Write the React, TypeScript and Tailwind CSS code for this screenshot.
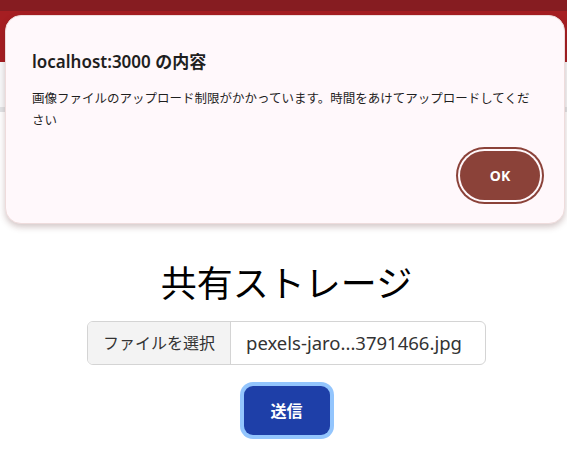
export default function App() {
  const jp = { fontFamily: '"Noto Sans", "Noto Sans CJK JP", sans-serif' }

  return (
    <div className="relative w-[567px] h-[455px] overflow-hidden bg-white" style={jp}>
      {/* Header */}
      <div className="h-[11px] bg-[#861c21]" />
      <div className="h-[51px] bg-[#a61e22]" />
      {/* Nav */}
      <div className="h-[50px] bg-[#f8f9fa] border-b-[5px] border-[#e2e4e6]" />

      {/* Main */}
      <main className="flex flex-col items-center pt-[148px] pl-[6px]">
        <h1 className="text-[36px] leading-[48px] text-black font-normal">共有ストレージ</h1>

        <div className="mt-[13px] flex h-[44px] w-[399px] rounded-[6px] border border-[#d4d4d4] overflow-hidden">
          <div className="flex w-[143px] items-center justify-center bg-[#f3f3f3] border-r border-[#d4d4d4] text-[16px] text-[#333]">
            ファイルを選択
          </div>
          <div className="flex flex-1 items-center pl-[15px] text-[18.5px] text-[#333]">
            pexels-jaro...3791466.jpg
          </div>
        </div>

        <button className="mt-[21px] h-[49px] w-[86px] rounded-[9px] bg-[#1e3fa8] text-[16px] font-bold text-white ring-4 ring-[#93c5fd]">
          送信
        </button>
      </main>

      {/* Alert dialog */}
      <div className="absolute left-[5px] top-[15px] w-[560px] h-[209px] rounded-[16px] border border-[#eedcdc] bg-[#fff8fb] shadow-[0_3px_6px_rgba(80,30,30,0.25)]">
        <div className="pl-[26px] pr-[24px] pt-[33px]">
          <div className="text-[17px] font-semibold text-[#1f1f1f] leading-[26px]">localhost:3000 の内容</div>
          <p className="mt-[13px] w-[508px] text-[12.5px] leading-[22px] text-[#1f1f1f]">
            画像ファイルのアップロード制限がかかっています。時間をあけてアップロードしてください
          </p>
        </div>
        <div className="absolute right-[24px] top-[135px]">
          <button className="h-[49px] w-[80px] rounded-full bg-[#8b4239] text-[14px] font-bold text-white ring-2 ring-[#8b4239] ring-offset-2 ring-offset-[#fff8fb]">
            OK
          </button>
        </div>
      </div>
    </div>
  )
}
